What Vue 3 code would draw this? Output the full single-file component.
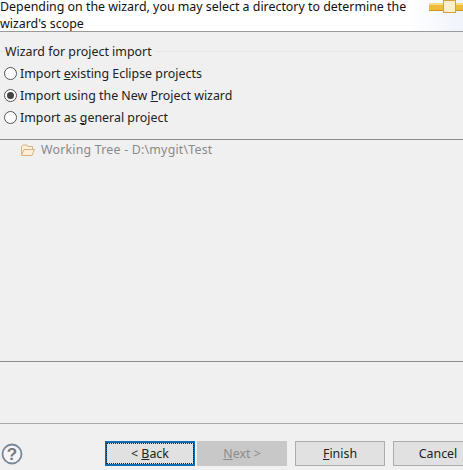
<template>
  <div class="wizard">
    <header class="banner">
      <p class="message">Depending on the wizard, you may select a directory to determine the wizard's scope</p>
      <svg class="banner-icon" width="34" height="13" viewBox="0 0 34 13">
        <rect x="0" y="3" width="34" height="8" fill="#eebb3a" />
        <rect x="0" y="3" width="34" height="2" fill="#f8dc80" />
        <rect x="0" y="10" width="34" height="1" fill="#c89820" />
        <rect x="14.500" y="0.500" width="12" height="12" fill="#fbeecb" stroke="#d8a030" />
      </svg>
    </header>

    <fieldset class="import-group">
      <legend>Wizard for project import</legend>
      <label v-for="option in options" :key="option.id" class="radio-row">
        <span class="radio" :class="{ checked: option.id === selected }"></span>
        <span>{{ option.before }}<u>{{ option.key }}</u>{{ option.after }}</span>
      </label>
    </fieldset>

    <div class="tree">
      <div class="tree-row">
        <svg width="16" height="14" viewBox="0 0 16 14" fill="#fbeedb" stroke="#d8b27c">
          <path d="M1.500 11.500V3.500L3 2h4l1 1.500h4.500V6" />
          <path d="M1.500 12.500L4 6.500h10.500L12 12.500z" />
        </svg>
        <span>Working Tree - D:\mygit\Test</span>
      </div>
    </div>

    <div class="spacer"></div>

    <footer class="actions">
      <svg class="help" width="22" height="22" viewBox="0 0 22 22">
        <circle cx="11" cy="11" r="9.500" fill="#f4f5f8" stroke="#7b8798" stroke-width="1.800" />
        <text x="11" y="17" text-anchor="middle" class="help-mark">?</text>
      </svg>
      <button class="btn default"><span>&lt; <u>B</u>ack</span></button>
      <button class="btn disabled"><span><u>N</u>ext &gt;</span></button>
      <button class="btn finish"><span><u>F</u>inish</span></button>
      <button class="btn cancel"><span>Cancel</span></button>
    </footer>
  </div>
</template>

<script setup>
import { ref } from "vue";

const selected = ref("wizard");

const options = [
  { id: "existing", before: "Import ", key: "e", after: "xisting Eclipse projects" },
  { id: "wizard", before: "Import using the New ", key: "P", after: "roject wizard" },
  { id: "general", before: "Import as ", key: "g", after: "eneral project" },
];
</script>

<style>
html,
body {
  margin: 0;
  overflow: hidden;
}
</style>

<style scoped>
.wizard {
  width: 463px;
  height: 470px;
  overflow: hidden;
  display: flex;
  flex-direction: column;
  background: #f0f0f0;
  color: #222;
  font-family: "Noto Sans", sans-serif;
  font-size: 12.4px;
}

.banner {
  height: 31px;
  flex: none;
  display: flex;
  align-items: flex-end;
  justify-content: space-between;
  overflow: hidden;
  background: linear-gradient(90deg, #fff 88%, #f1f3fb);
  border-bottom: 1px solid #9a9a9a;
}

.message {
  width: 425px;
  margin: 0 0 -1px;
  line-height: 17px;
  color: #111;
}

.banner-icon {
  align-self: flex-start;
  flex: none;
}

.import-group {
  margin: 11px 0 0;
  padding: 0 0 0 4px;
  height: 75px;
  flex: none;
  border: 0;
  border-top: 1px solid #e4e4e4;
}

legend {
  padding: 0 4px 0 1px;
  margin-bottom: 2px;
  line-height: 17px;
}

.radio-row {
  display: flex;
  align-items: center;
  gap: 3px;
  height: 22px;
}

.radio {
  width: 11px;
  height: 11px;
  border: 1px solid #555;
  border-radius: 50%;
  background: #fff;
  position: relative;
}

.radio.checked::after {
  content: "";
  position: absolute;
  inset: 2px;
  border-radius: 50%;
  background: #444;
}

.tree {
  height: 221px;
  flex: none;
  margin-top: 20px;
  border-top: 1px solid #8c8c8c;
  border-bottom: 1px solid #8c8c8c;
  color: #8a8a8a;
}

.tree-row {
  display: flex;
  align-items: center;
  gap: 5px;
  padding: 0 0 0 20px;
  height: 19px;
  letter-spacing: 0.2px;
}

.spacer {
  height: 61px;
  flex: none;
  border-bottom: 1px solid #a8a8a8;
}

.actions {
  display: flex;
  align-items: center;
  padding-top: 17px;
}

.help {
  margin-left: 1px;
  margin-right: 82px;
  flex: none;
}

.help-mark {
  font-family: "Liberation Sans", sans-serif;
  font-size: 17px;
  font-weight: 700;
  fill: #77797d;
}

.btn {
  width: 90px;
  height: 25px;
  flex: none;
  padding: 0;
  border: 1px solid #adadad;
  background: #e1e1e1;
  color: #222;
  font: inherit;
}

.default {
  border: 2px solid #0f6cb0;
}

.default span {
  display: block;
  line-height: 19px;
  outline: 1px dotted #222;
}

.disabled {
  margin-left: 2px;
  background: #c8c8c8;
  border-color: #c8c8c8;
  color: #8c8c8c;
}

.finish {
  margin-left: 8px;
}

.cancel {
  margin-left: 8px;
}
</style>
